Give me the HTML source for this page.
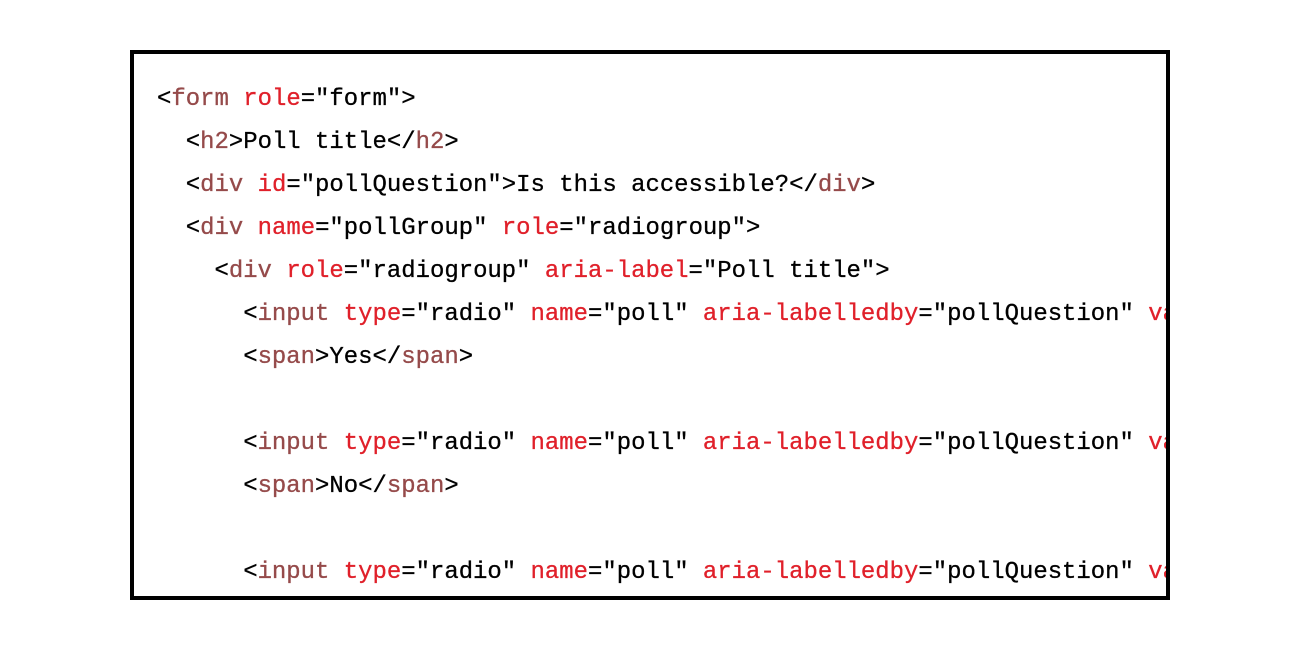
<!DOCTYPE html>
<html><head><style>
html,body{margin:0;padding:0;background:#fff;width:1300px;height:650px;overflow:hidden}
.box{position:absolute;left:130px;top:50px;width:1032px;height:542px;border:4px solid #000;overflow:hidden}
pre{position:absolute;left:23px;top:24px;margin:0;font-family:"Liberation Mono",monospace;font-size:23.95px;line-height:43px;color:#000;white-space:pre;-webkit-text-stroke:0.3px #000}
.t{color:#954a4a;-webkit-text-stroke-color:#954a4a}.a{color:#e0202a;-webkit-text-stroke-color:#e0202a}
</style></head><body>
<div class="box"><pre>&lt;<span class="t">form</span> <span class="a">role</span>="form"&gt;
  &lt;<span class="t">h2</span>&gt;Poll title&lt;/<span class="t">h2</span>&gt;
  &lt;<span class="t">div</span> <span class="a">id</span>="pollQuestion"&gt;Is this accessible?&lt;/<span class="t">div</span>&gt;
  &lt;<span class="t">div</span> <span class="a">name</span>="pollGroup" <span class="a">role</span>="radiogroup"&gt;
    &lt;<span class="t">div</span> <span class="a">role</span>="radiogroup" <span class="a">aria-label</span>="Poll title"&gt;
      &lt;<span class="t">input</span> <span class="a">type</span>="radio" <span class="a">name</span>="poll" <span class="a">aria-labelledby</span>="pollQuestion" <span class="a">value</span>="yes"&gt;
      &lt;<span class="t">span</span>&gt;Yes&lt;/<span class="t">span</span>&gt;

      &lt;<span class="t">input</span> <span class="a">type</span>="radio" <span class="a">name</span>="poll" <span class="a">aria-labelledby</span>="pollQuestion" <span class="a">value</span>="no"&gt;
      &lt;<span class="t">span</span>&gt;No&lt;/<span class="t">span</span>&gt;

      &lt;<span class="t">input</span> <span class="a">type</span>="radio" <span class="a">name</span>="poll" <span class="a">aria-labelledby</span>="pollQuestion" <span class="a">value</span>="maybe"&gt;
</pre></div>
</body></html>
